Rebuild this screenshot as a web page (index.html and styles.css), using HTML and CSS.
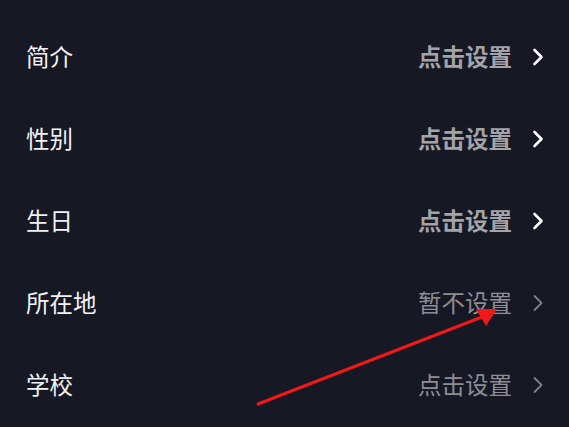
FILE: index.html
```html
<!DOCTYPE html>
<html lang="zh">
<head>
<meta charset="utf-8">
<link rel="stylesheet" href="styles.css">
</head>
<body>
<div class="list">
  <div class="row strong"><span class="label">简介</span><span class="value">点击设置</span><svg class="chev" viewBox="0 0 12 18"><path d="M2.5 2 L9.5 9 L2.5 16"/></svg></div>
  <div class="row strong"><span class="label">性别</span><span class="value">点击设置</span><svg class="chev" viewBox="0 0 12 18"><path d="M2.5 2 L9.5 9 L2.5 16"/></svg></div>
  <div class="row strong"><span class="label">生日</span><span class="value">点击设置</span><svg class="chev" viewBox="0 0 12 18"><path d="M2.5 2 L9.5 9 L2.5 16"/></svg></div>
  <div class="row light"><span class="label">所在地</span><span class="value">暂不设置</span><svg class="chev" viewBox="0 0 12 18"><path d="M2.5 2 L9.5 9 L2.5 16"/></svg></div>
  <div class="row light"><span class="label">学校</span><span class="value">点击设置</span><svg class="chev" viewBox="0 0 12 18"><path d="M2.5 2 L9.5 9 L2.5 16"/></svg></div>
</div>
<svg class="arrow" width="569" height="427" viewBox="0 0 569 427">
  <line x1="258" y1="404" x2="482" y2="317" stroke="#f01818" stroke-width="3" stroke-linecap="round"/>
  <polygon points="497,309 476,309 486,326" fill="#f01818"/>
</svg>
</body>
</html>
```
FILE: styles.css
```css
html, body {
  margin: 0;
  padding: 0;
  background: #161824;
  width: 569px;
  height: 427px;
  overflow: hidden;
  font-family: "Noto Sans CJK SC", "Noto Sans", sans-serif;
}
.list {
  padding-top: 16px;
  display: flex;
  flex-direction: column;
}
.row {
  height: 82px;
  display: flex;
  align-items: center;
  padding: 0 25px 0 26px;
}
.label {
  flex: 1;
  color: #f2f2f4;
  font-size: 23.5px;
  line-height: 1;
}
.value {
  font-size: 23.5px;
  line-height: 1;
  margin-right: 20px;
}
.chev {
  width: 12px;
  height: 18px;
  fill: none;
  stroke-linecap: round;
  stroke-linejoin: round;
}
.strong .value {
  color: #a3a3a8;
  font-weight: 700;
}
.strong .chev {
  stroke: #ffffff;
  stroke-width: 2.6;
}
.light .value {
  color: #8d8d93;
  font-weight: 400;
}
.light .chev {
  stroke: #808086;
  stroke-width: 1.8;
}
.arrow {
  position: absolute;
  left: 0;
  top: 0;
  pointer-events: none;
}
```
